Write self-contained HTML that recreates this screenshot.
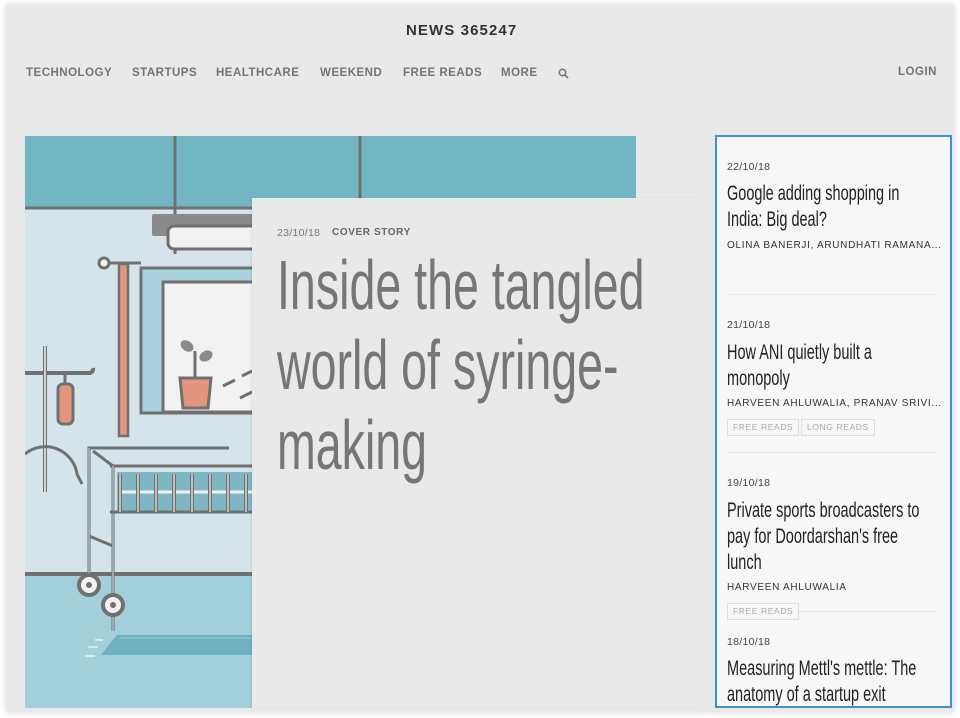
<!DOCTYPE html>
<html><head><meta charset="utf-8"><style>
*{margin:0;padding:0;box-sizing:border-box}
html,body{width:960px;height:718px;overflow:hidden;background:#fff;font-family:"Liberation Sans",sans-serif}
.frame{position:absolute;left:6px;top:5px;width:948px;height:707px;background:#e9e9e9;box-shadow:0 0 6px rgba(0,0,0,.18)}
.a{position:absolute;white-space:nowrap}
.nav{font-weight:bold;font-size:11.5px;color:#747474;letter-spacing:.5px;top:67px}
.logo{left:406px;top:22px;font-weight:bold;font-size:15px;color:#333;letter-spacing:1.1px}
.card{position:absolute;left:252px;top:198px;width:450px;height:510px;background:#e9e9e9;box-shadow:-1px 0 2px rgba(0,0,0,.08)}
.side{position:absolute;left:715px;top:135px;width:237px;height:573px;background:#f7f7f7;border:2px solid #3b93d0;overflow:hidden}
.date{font-size:10.5px;color:#444;letter-spacing:.3px}
.t{position:absolute;left:10px;width:290px;font-size:21px;line-height:26px;color:#222;transform:scaleX(.69);transform-origin:0 0;white-space:normal}
.au{font-size:10px;color:#333;letter-spacing:.7px}
.tag{position:absolute;height:17px;border:1px solid #ddd;font-size:8.5px;color:#aaa;letter-spacing:.6px;line-height:15px;padding:0 5px;background:#f7f7f7}
.hr{position:absolute;left:10px;width:210px;height:1px;background:#e6e6e6}
.h{position:absolute;left:25px;top:47px;width:610px;font-size:70px;line-height:80px;color:#767676;transform:scaleX(.665);transform-origin:0 0;white-space:normal}
</style></head><body>
<div class="frame"></div>
<div class="a logo">NEWS 365247</div>
<div class="a nav" style="left:26px">TECHNOLOGY</div>
<div class="a nav" style="left:132px">STARTUPS</div>
<div class="a nav" style="left:216px">HEALTHCARE</div>
<div class="a nav" style="left:320px">WEEKEND</div>
<div class="a nav" style="left:403px">FREE READS</div>
<div class="a nav" style="left:501px">MORE</div>
<svg class="a" style="left:558px;top:68px" width="11" height="11" viewBox="0 0 11 11"><circle cx="4.5" cy="4.5" r="3.2" fill="none" stroke="#777" stroke-width="1.6"/><path d="M7 7l3 3" stroke="#777" stroke-width="1.8"/></svg>
<div class="a nav" style="left:898px;top:66px">LOGIN</div>

<svg class="a" style="left:25px;top:136px" width="611" height="572" viewBox="0 0 611 572">
<rect width="611" height="572" fill="#d5e4ea"/>
<rect width="611" height="72" fill="#72b6c4"/>
<path d="M0 72H611" stroke="#707070" stroke-width="3"/>
<path d="M150 0V118M335 0V72" stroke="#707070" stroke-width="3"/>
<rect x="127" y="78" width="130" height="22" rx="2" fill="#8a8a8a"/>
<rect x="143" y="90" width="110" height="23" rx="6" fill="#f2f2f2" stroke="#707070" stroke-width="3"/>
<rect x="116" y="132" width="120" height="145" fill="#a9d3de" stroke="#707070" stroke-width="3"/>
<rect x="138" y="146" width="98" height="130" fill="#f2f2f2" stroke="#707070" stroke-width="3"/>
<path d="M79 127H116" stroke="#707070" stroke-width="3"/>
<circle cx="79" cy="127" r="5" fill="#f2f2f2" stroke="#707070" stroke-width="3"/>
<rect x="94" y="128" width="9" height="172" fill="#e39580" stroke="#707070" stroke-width="2.5"/>
<path d="M155 242h31l-3 30h-25z" fill="#e39580" stroke="#707070" stroke-width="3"/>
<path d="M170 242V215" stroke="#707070" stroke-width="3"/>
<ellipse cx="162" cy="210" rx="7" ry="5" fill="#8a8a8a" transform="rotate(35 162 210)"/>
<ellipse cx="181" cy="220" rx="7" ry="5" fill="#8a8a8a" transform="rotate(-30 181 220)"/>
<path d="M198 250l12-6M217 240l10-5M215 262l12-6" stroke="#707070" stroke-width="3"/>
<path d="M20 356V210M0 237H64a4 4 0 0 0 4-5" fill="none" stroke="#707070" stroke-width="4"/>
<path d="M20 356V210" stroke="#f2f2f2" stroke-width="1.5"/>
<path d="M40 237V248" stroke="#707070" stroke-width="3"/>
<rect x="33" y="248" width="15" height="40" rx="5" fill="#e39580" stroke="#707070" stroke-width="3"/>
<path d="M0 318a32 32 0 0 1 52 20 l5 10" fill="none" stroke="#707070" stroke-width="3"/>
<rect x="0" y="438" width="611" height="134" fill="#a3cfdb"/>
<path d="M0 438H611" stroke="#707070" stroke-width="4"/>
<rect x="92" y="336" width="140" height="41" fill="#7fb6c3"/>
<path d="M64 447V312H204M85 330H230M88 330V495M68 315L88 330M64 400L88 410" fill="none" stroke="#707070" stroke-width="3"/>
<path d="M64 447V312M88 330V495" stroke="#bfe0e8" stroke-width="1"/>
<path d="M95 356H230" stroke="#f2f2f2" stroke-width="3"/>
<path d="M85 376H230" stroke="#707070" stroke-width="3"/>
<path d="M95 338V376M113 338V376M131 338V376M149 338V376M167 338V376M185 338V376M203 338V376M221 338V376" stroke="#707070" stroke-width="4"/>
<path d="M95 338V376M113 338V376M131 338V376M149 338V376M167 338V376M185 338V376M203 338V376M221 338V376" stroke="#f2f2f2" stroke-width="1.2"/>
<circle cx="64" cy="449" r="10" fill="#f2f2f2" stroke="#707070" stroke-width="4"/><circle cx="64" cy="449" r="3" fill="#707070"/>
<circle cx="88" cy="469" r="10" fill="#f2f2f2" stroke="#707070" stroke-width="4"/><circle cx="88" cy="469" r="3" fill="#707070"/>
<path d="M92 499H611v20H76z" fill="#6fb1bf"/>
<path d="M95 502H611" stroke="#a3cfdb" stroke-width="1"/>
<path d="M60 520h10M63 511h10M70 504h8" stroke="#e6f0f2" stroke-width="1.5"/>
</svg>

<div class="card">
<div class="a" style="left:25px;top:29px;font-size:10.5px;color:#777;letter-spacing:.3px">23/10/18</div>
<div class="a" style="left:80px;top:29px;font-size:10px;font-weight:bold;color:#666;letter-spacing:.6px">COVER STORY</div>
<div class="h">Inside the tangled world of syringe-making</div>
</div>

<div class="side">
<div class="a date" style="left:10px;top:24px">22/10/18</div>
<div class="t" style="top:44px">Google adding shopping in India: Big deal?</div>
<div class="a au" style="left:10px;top:103px">OLINA BANERJI, ARUNDHATI RAMANA...</div>
<div class="hr" style="top:157px"></div>
<div class="a date" style="left:10px;top:182px">21/10/18</div>
<div class="t" style="top:203px">How ANI quietly built a monopoly</div>
<div class="a au" style="left:10px;top:261px">HARVEEN AHLUWALIA, PRANAV SRIVI...</div>
<div class="tag" style="left:10px;top:282px">FREE READS</div>
<div class="tag" style="left:84px;top:282px">LONG READS</div>
<div class="hr" style="top:315px"></div>
<div class="a date" style="left:10px;top:340px">19/10/18</div>
<div class="t" style="top:361px">Private sports broadcasters to pay for Doordarshan's free lunch</div>
<div class="a au" style="left:10px;top:445px">HARVEEN AHLUWALIA</div>
<div class="hr" style="top:474px"></div>
<div class="tag" style="left:10px;top:466px">FREE READS</div>
<div class="a date" style="left:10px;top:499px">18/10/18</div>
<div class="t" style="top:519px">Measuring Mettl's mettle: The anatomy of a startup exit</div>
</div>
</body></html>
